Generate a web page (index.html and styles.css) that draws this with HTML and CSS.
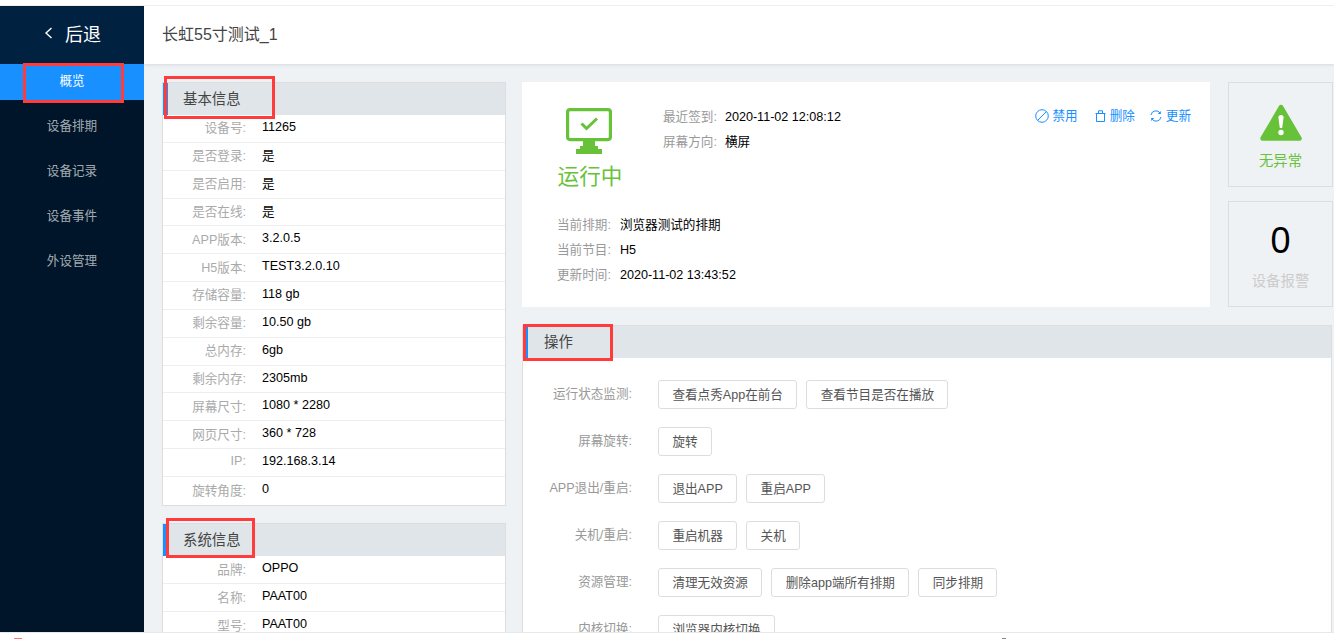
FILE: index.html
```html
<!DOCTYPE html>
<html>

<head>
  <meta charset="UTF-8">
  <title>设备详情</title>
  <link rel="stylesheet" href="styles.css">
</head>

<body>
  <div class="top-strip"></div>
  <div class="layout">
    <div class="sidebar">
      <div class="back">
        <svg class="back-arrow" width="9" height="12" viewBox="0 0 9 12"><polyline points="7.5,1 2,6 7.5,11" fill="none" stroke="#fff" stroke-width="1.4"/></svg>
        <span>后退</span>
      </div>
      <div class="menu">
        <div class="menu-item active">概览<i class="mark mark-menu"></i></div>
        <div class="menu-item">设备排期</div>
        <div class="menu-item">设备记录</div>
        <div class="menu-item">设备事件</div>
        <div class="menu-item">外设管理</div>
      </div>
    </div>

    <div class="main">
      <div class="header">长虹55寸测试_1</div>
      <div class="content">
        <div class="left-col">
          <div class="panel">
            <div class="panel-title">基本信息<i class="mark mark-basic"></i></div>
            <div class="row"><span class="key">设备号:</span><span class="val">11265</span></div>
            <div class="row"><span class="key">是否登录:</span><span class="val">是</span></div>
            <div class="row"><span class="key">是否启用:</span><span class="val">是</span></div>
            <div class="row"><span class="key">是否在线:</span><span class="val">是</span></div>
            <div class="row"><span class="key">APP版本:</span><span class="val">3.2.0.5</span></div>
            <div class="row"><span class="key">H5版本:</span><span class="val">TEST3.2.0.10</span></div>
            <div class="row"><span class="key">存储容量:</span><span class="val">118 gb</span></div>
            <div class="row"><span class="key">剩余容量:</span><span class="val">10.50 gb</span></div>
            <div class="row"><span class="key">总内存:</span><span class="val">6gb</span></div>
            <div class="row"><span class="key">剩余内存:</span><span class="val">2305mb</span></div>
            <div class="row"><span class="key">屏幕尺寸:</span><span class="val">1080 * 2280</span></div>
            <div class="row"><span class="key">网页尺寸:</span><span class="val">360 * 728</span></div>
            <div class="row"><span class="key">IP:</span><span class="val">192.168.3.14</span></div>
            <div class="row"><span class="key">旋转角度:</span><span class="val">0</span></div>
          </div>
          <div class="panel">
            <div class="panel-title">系统信息<i class="mark mark-system"></i></div>
            <div class="row"><span class="key">品牌:</span><span class="val">OPPO</span></div>
            <div class="row"><span class="key">名称:</span><span class="val">PAAT00</span></div>
            <div class="row"><span class="key">型号:</span><span class="val">PAAT00</span></div>
          </div>
        </div>

        <div class="right-col">
          <div class="top-row">
            <div class="status-card">
              <div class="status-head">
                <div class="status-badge">
                  <svg class="status-icon" width="46" height="46" viewBox="0 0 46 46">
                    <rect x="1.6" y="1.6" width="42.8" height="30" rx="2.5" fill="none" stroke="#67c23a" stroke-width="3.2"/>
                    <polyline points="15.5,15.5 20.5,20.5 31,10.5" fill="none" stroke="#67c23a" stroke-width="3"/>
                    <path d="M17 33h12v5h3v3h4v5H10v-5h4v-3h3z" fill="#67c23a"/>
                  </svg>
                  <div class="status-text">运行中</div>
                </div>
                <div class="status-info">
                  <div class="line"><span class="line-key">最近签到:</span><span>2020-11-02 12:08:12</span></div>
                  <div class="line"><span class="line-key">屏幕方向:</span><span>横屏</span></div>
                </div>
                <div class="actions">
                  <a class="action action-ban">
                    <svg width="14" height="14" viewBox="0 0 14 14"><circle cx="7" cy="7" r="6.3" fill="none" stroke="#1890ff"/><line x1="2.6" y1="11.4" x2="11.4" y2="2.6" stroke="#1890ff"/></svg>
                    禁用
                  </a>
                  <a class="action">
                    <svg width="11" height="12" viewBox="0 0 11 12"><path d="M1.5 3.5h8v8h-8zM.5 3.5h10M3.5 3.5V.8h4v2.7" fill="none" stroke="#1890ff"/></svg>
                    删除
                  </a>
                  <a class="action">
                    <svg width="12" height="12" viewBox="0 0 12 12"><path d="M1 5A5 5 0 0 1 10.2 3.2M11 7A5 5 0 0 1 1.8 8.8" fill="none" stroke="#1890ff"/><path d="M10.8 1v3H7.8zM1.2 11V8h3z" fill="#1890ff"/></svg>
                    更新
                  </a>
                </div>
              </div>
              <div class="status-lines">
                <div class="line"><span class="line-key">当前排期:</span><span>浏览器测试的排期</span></div>
                <div class="line"><span class="line-key">当前节目:</span><span>H5</span></div>
                <div class="line"><span class="line-key">更新时间:</span><span>2020-11-02 13:43:52</span></div>
              </div>
            </div>
            <div class="side-cards">
              <div class="side-card">
                <svg width="42" height="37" viewBox="0 0 42 37">
                  <polygon points="21,3 39.5,34.5 2.5,34.5" fill="#67c23a" stroke="#67c23a" stroke-width="4.5" stroke-linejoin="round"/>
                  <path d="M18.4 13.5a2.6 2.6 0 0 1 5.2 0L22.2 24h-2.4z" fill="#fff"/>
                  <circle cx="21" cy="28.5" r="2.7" fill="#fff"/>
                </svg>
                <div class="side-ok">无异常</div>
              </div>
              <div class="side-card">
                <div class="side-num">0</div>
                <div class="side-label">设备报警</div>
              </div>
            </div>
          </div>

          <div class="panel op-panel">
            <div class="panel-title">操作<i class="mark mark-op"></i></div>
            <div class="op-body">
              <div class="op-row">
                <span class="op-key">运行状态监测:</span>
                <button class="btn">查看点秀App在前台</button>
                <button class="btn">查看节目是否在播放</button>
              </div>
              <div class="op-row">
                <span class="op-key">屏幕旋转:</span>
                <button class="btn">旋转</button>
              </div>
              <div class="op-row">
                <span class="op-key">APP退出/重启:</span>
                <button class="btn">退出APP</button>
                <button class="btn">重启APP</button>
              </div>
              <div class="op-row">
                <span class="op-key">关机/重启:</span>
                <button class="btn">重启机器</button>
                <button class="btn">关机</button>
              </div>
              <div class="op-row">
                <span class="op-key">资源管理:</span>
                <button class="btn">清理无效资源</button>
                <button class="btn">删除app端所有排期</button>
                <button class="btn">同步排期</button>
              </div>
              <div class="op-row">
                <span class="op-key">内核切换:</span>
                <button class="btn">浏览器内核切换</button>
              </div>
            </div>
          </div>
        </div>
      </div>
    </div>
  </div>
  <div class="bottom-strip">
    <i class="tip tip-red"></i>
    <i class="tip tip-dark"></i>
  </div>
</body>

</html>
```

FILE: styles.css
```css
* {
  box-sizing: border-box;
}

html,
body {
  height: 100%;
}

body {
  display: flex;
  flex-direction: column;
  margin: 0;
  overflow: hidden;
  font-family: "Liberation Sans", "Noto Sans CJK SC", sans-serif;
  font-size: 12.6px;
  color: #000;
  background: #fff;
}

.top-strip {
  flex: none;
  height: 6px;
  border-bottom: 1px solid #eee;
}

.layout {
  display: flex;
  flex: none;
  height: 626px;
  overflow: hidden;
}

.bottom-strip {
  display: flex;
  flex: none;
  align-items: flex-end;
  height: 7px;
  border-top: 1px solid #e8e8e8;
}

.tip {
  display: block;
  height: 1px;
}

.tip-red {
  width: 8px;
  margin-left: 14px;
  background: #f77;
}

.tip-dark {
  width: 4px;
  margin-left: 980px;
  background: #888;
}

/* sidebar */
.sidebar {
  flex: none;
  width: 144px;
  background: #001529;
  color: rgba(255, 255, 255, 0.65);
}

.back {
  display: flex;
  align-items: center;
  height: 58px;
  padding-left: 44px;
  padding-bottom: 4px;
  gap: 12px;
  font-size: 18px;
  color: #fff;
  background: #002140;
}

.menu {
  display: flex;
  flex-direction: column;
  gap: 9px;
}

.menu-item {
  position: relative;
  height: 36px;
  line-height: 34px;
  text-align: center;
}

.menu-item.active {
  color: #fff;
  background: #1890ff;
}

/* red marks drawn over the screenshot */
.mark {
  position: absolute;
  border: 3px solid #ff3b3b;
}

.mark-menu {
  left: 23px;
  top: -1px;
  width: 101px;
  height: 40px;
}

.mark-basic {
  left: -4px;
  top: -7px;
  width: 111px;
  height: 43px;
}

.mark-system {
  left: -2px;
  top: -6px;
  width: 89px;
  height: 40px;
}

.mark-op {
  left: -5px;
  top: -2px;
  width: 90px;
  height: 37px;
}

/* main */
.main {
  display: flex;
  flex: 1;
  flex-direction: column;
  min-width: 0;
  background: #eff2f5;
}

.header {
  flex: none;
  height: 58px;
  padding-left: 18px;
  font-size: 16px;
  line-height: 57px;
  color: #444;
  background: #fff;
  box-shadow: 0 1px 3px rgba(0, 0, 0, 0.1);
}

.content {
  display: flex;
  flex: 1;
  align-items: flex-start;
  gap: 16px;
  padding: 18px 1px 0 18px;
}

.left-col {
  display: flex;
  flex: none;
  flex-direction: column;
  gap: 17.5px;
  width: 344px;
}

.right-col {
  flex: 1;
  min-width: 0;
}

.panel {
  border: 1px solid #ddd;
  background: #fff;
}

.panel-title {
  position: relative;
  height: 32px;
  padding-left: 15px;
  border-left: 5px solid #1890ff;
  font-size: 14.4px;
  line-height: 32px;
  color: #444;
  background: #dfe5e8;
}

.row {
  display: flex;
  align-items: center;
  height: 27.85px;
  padding-bottom: 3px;
  border-bottom: 1px solid #eee;
}

.row:nth-last-child(1) {
  border-bottom: none;
}

.key {
  flex: none;
  width: 83px;
  margin-right: 16px;
  text-align: right;
  color: #aaa;
}

.val {
  color: #000;
}

/* status */
.top-row {
  display: flex;
  gap: 18px;
  height: 225px;
}

.status-card {
  flex: none;
  width: 688px;
  padding: 26px 19px 0 35px;
  background: #fff;
}

.status-head {
  display: flex;
  align-items: flex-start;
}

.status-badge {
  display: flex;
  flex: none;
  flex-direction: column;
  align-items: center;
  width: 66px;
}

.status-icon {
  margin-right: 2px;
}

.status-text {
  margin-top: 8px;
  font-size: 21.6px;
  line-height: 30px;
  color: #67c23a;
}

.status-info {
  margin-left: 40px;
  margin-top: -1px;
}

.line {
  height: 25px;
  line-height: 20px;
}

.line-key {
  display: inline-block;
  margin-right: 8px;
  color: #999;
}

.status-lines .line-key {
  margin-right: 9px;
}

.actions {
  display: flex;
  gap: 15px;
  margin-left: auto;
  line-height: 16px;
  color: #1890ff;
}

.action {
  display: flex;
  align-items: center;
  gap: 4px;
}

.action-ban {
  gap: 3px;
  margin-right: 2px;
}

.status-lines {
  margin-top: 23px;
}

.side-cards {
  display: flex;
  flex: none;
  flex-direction: column;
  gap: 14px;
  width: 105px;
}

.side-card {
  display: flex;
  flex: 1;
  flex-direction: column;
  align-items: center;
  padding-top: 21px;
  border: 1px solid #ddd;
}

.side-card:first-child {
  flex: none;
  height: 105px;
}

.side-ok {
  margin-top: 8px;
  font-size: 14.4px;
  color: #67c23a;
}

.side-num {
  margin-top: -7px;
  font-size: 36px;
  line-height: 50px;
}

.side-label {
  margin-top: 3px;
  font-size: 14.4px;
  color: #ccc;
}

/* operations */
.op-panel {
  width: 810px;
  height: 400px;
  margin-top: 18px;
}

.op-panel .panel-title {
  padding-left: 16px;
}

.op-body {
  display: flex;
  flex-direction: column;
  gap: 18px;
  padding-top: 22px;
}

.op-row {
  display: flex;
  align-items: center;
  gap: 9px;
}

.op-key {
  flex: none;
  width: 109px;
  margin-right: 17px;
  padding-bottom: 5px;
  text-align: right;
  color: #999;
}

.btn {
  height: 29px;
  padding: 0 13.4px 2px;
  border: 1px solid #ddd;
  border-radius: 3px;
  font-family: inherit;
  font-size: 12.6px;
  color: #555;
  background: #fff;
}
```
